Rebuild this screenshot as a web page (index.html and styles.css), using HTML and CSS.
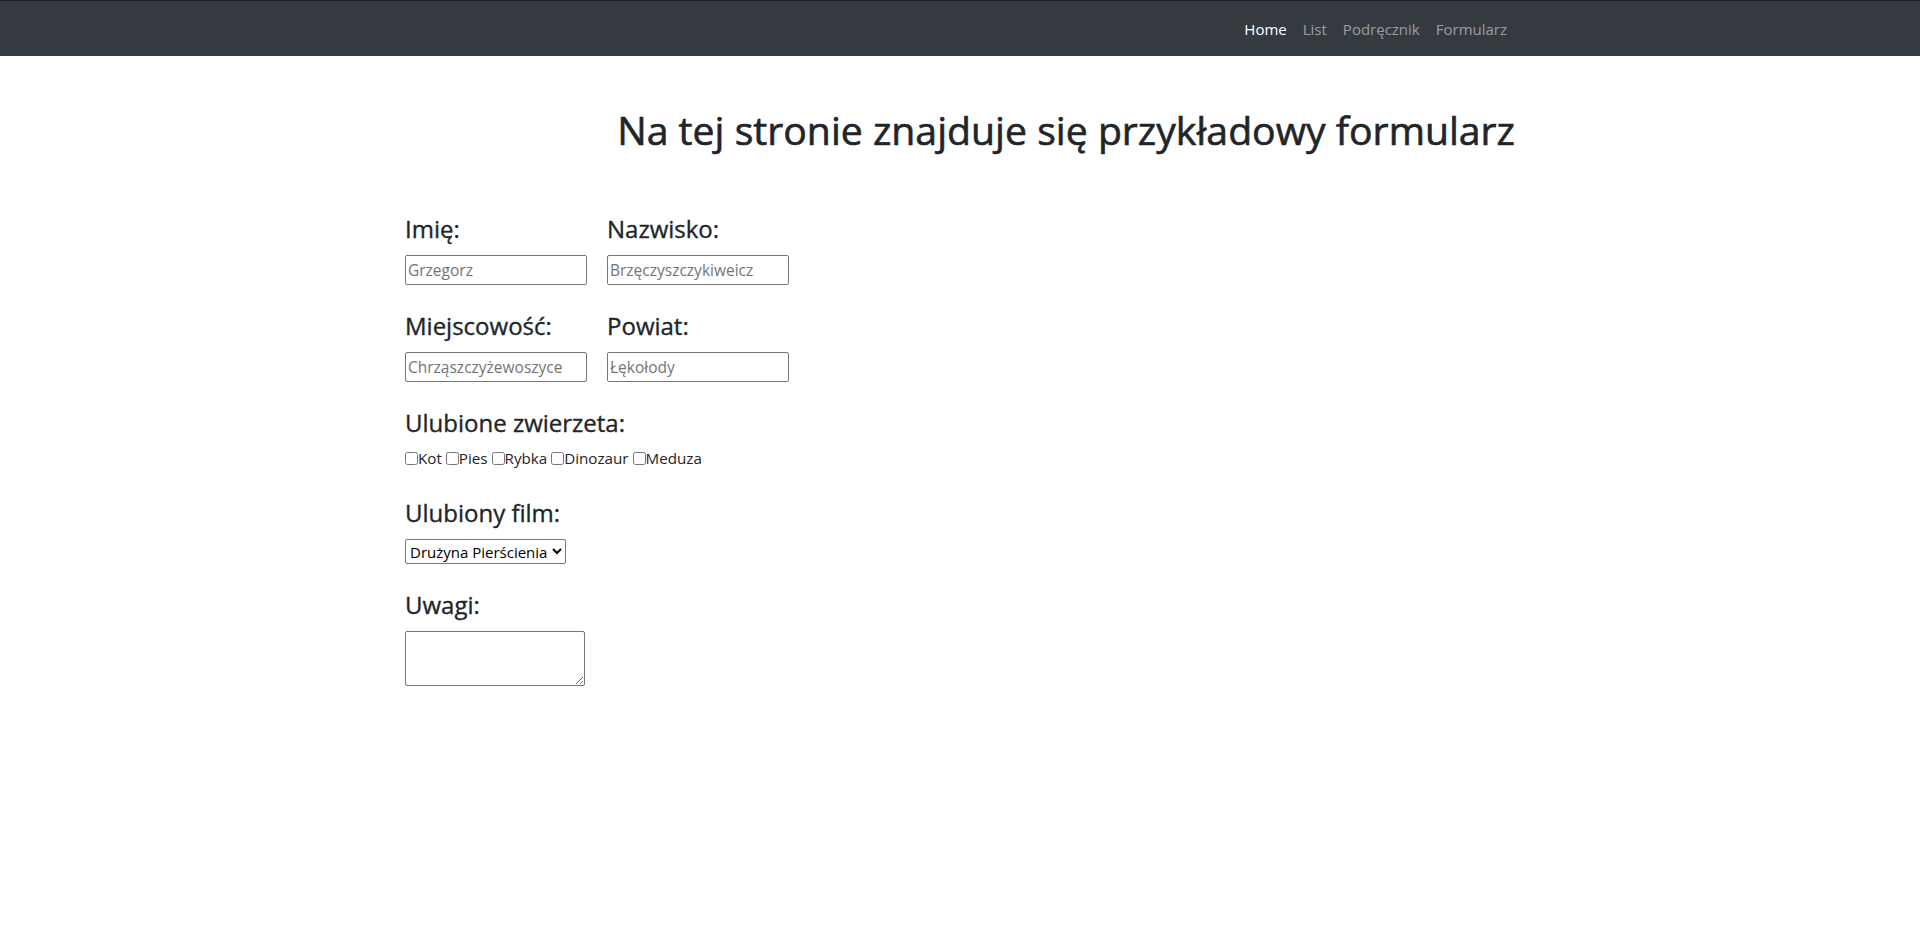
FILE: index.html
```html
<!DOCTYPE html>
<html lang="pl">
<head>
<meta charset="utf-8">
<title>Formularz</title>
<link rel="stylesheet" href="styles.css">
</head>
<body>
<nav class="navbar">
  <div class="container nav-inner">
    <ul class="nav-list">
      <li><a class="nav-link active" href="#">Home</a></li>
      <li><a class="nav-link" href="#">List</a></li>
      <li><a class="nav-link" href="#">Podręcznik</a></li>
      <li><a class="nav-link" href="#">Formularz</a></li>
    </ul>
  </div>
</nav>
<main class="container">
  <h1 class="title">Na tej stronie znajduje się przykładowy formularz</h1>
  <form class="form">
    <div class="row">
      <div class="field"><label class="lbl" for="imie">Imię:</label><input id="imie" class="txt" placeholder="Grzegorz"></div>
      <div class="field"><label class="lbl" for="nazwisko">Nazwisko:</label><input id="nazwisko" class="txt" placeholder="Brzęczyszczykiweicz"></div>
    </div>
    <div class="row">
      <div class="field"><label class="lbl" for="miejsc">Miejscowość:</label><input id="miejsc" class="txt" placeholder="Chrząszczyżewoszyce"></div>
      <div class="field"><label class="lbl" for="powiat">Powiat:</label><input id="powiat" class="txt" placeholder="Łękołody"></div>
    </div>
    <div class="group group-checks">
      <div class="lbl">Ulubione zwierzeta:</div>
      <div class="checks"><label><input type="checkbox" class="cb">Kot</label> <label><input type="checkbox" class="cb">Pies</label> <label><input type="checkbox" class="cb">Rybka</label> <label><input type="checkbox" class="cb">Dinozaur</label> <label><input type="checkbox" class="cb">Meduza</label></div>
    </div>
    <div class="group">
      <label class="lbl" for="film">Ulubiony film:</label>
      <select id="film" class="sel"><option>Drużyna Pierścienia</option><option>Dwie Wieże</option><option>Powrót Króla</option></select>
    </div>
    <div class="group">
      <label class="lbl" for="uwagi">Uwagi:</label>
      <textarea id="uwagi" class="area"></textarea>
    </div>
  </form>
</main>
</body>
</html>
```
FILE: styles.css
```css
* { box-sizing: border-box; }
html, body { margin: 0; padding: 0; }
body {
  font-family: "Open Sans", "Noto Sans", sans-serif;
  font-size: 16px;
  line-height: 1.5;
  color: #212529;
  background: #fff;
}
.container { width: 1140px; margin: 0 auto; padding: 0 15px; }
.navbar { background: #343a40; border-top: 1px solid #1e2124; height: 56px; }
.nav-inner { display: flex; justify-content: flex-end; height: 100%; align-items: center; }
.nav-list { list-style: none; margin: 0; padding: 0; display: flex; }
.nav-link { display: block; padding: 8px; font-size: 15px; line-height: 24px; color: rgba(255,255,255,.5); text-decoration: none; }
.nav-link.active { color: #fff; }
.title { margin: 50px 0 0; font-size: 39.2px; font-weight: 500; line-height: 1.2; text-align: right; -webkit-text-stroke: 0.6px #212529; }
.form { margin-top: 62px; display: flex; flex-direction: column; gap: 27px; }
.row { display: flex; gap: 20px; }
.field { display: flex; flex-direction: column; align-items: flex-start; }
.lbl { display: block; font-size: 24px; font-weight: 500; line-height: 1.2; margin-bottom: 11px; -webkit-text-stroke: 0.35px #212529; }
.txt { width: 182px; height: 30px; font-family: inherit; font-size: 15.5px; color: #212529; border: 1px solid #767676; border-radius: 2px; padding: 1px 2px; }
.txt::placeholder { color: #757575; }
.group { display: block; }
.group-checks { margin-bottom: 2px; }
.group-checks .lbl { margin-bottom: 9px; }
.checks { font-size: 15.2px; line-height: 24px; }
.cb { margin: 0; width: 13px; height: 13px; vertical-align: -1px; }
.sel { display: block; width: 161px; height: 25px; font-family: inherit; font-size: 15px; color: #000; border: 1px solid #767676; border-radius: 2px; background: #fff; }
.area { display: block; width: 180px; height: 55px; font-family: inherit; font-size: 16px; border: 1px solid #767676; border-radius: 2px; resize: vertical; }
```
